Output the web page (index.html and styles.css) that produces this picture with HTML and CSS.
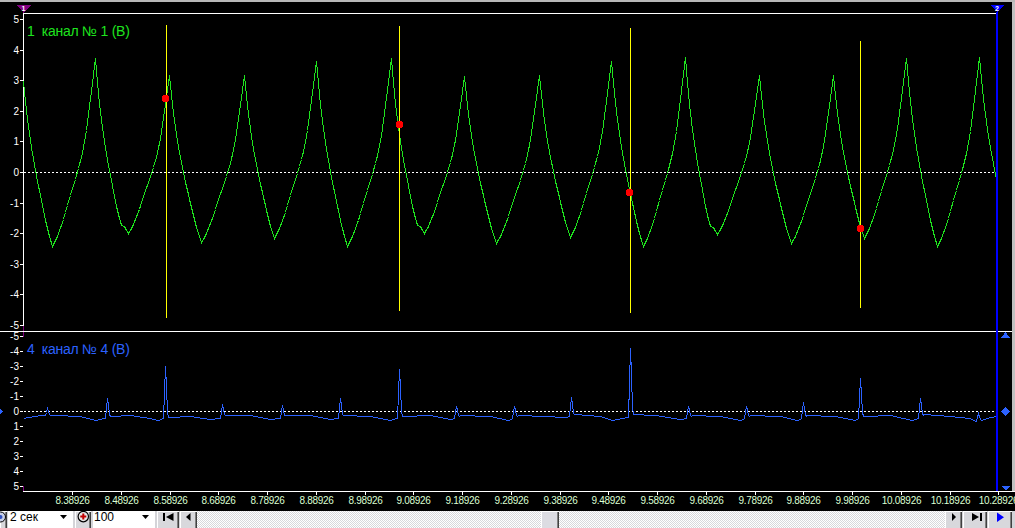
FILE: index.html
```html
<!DOCTYPE html>
<html lang="ru">
<head>
<meta charset="utf-8">
<title>Осциллограмма</title>
<link rel="stylesheet" href="styles.css">
</head>
<body>
<div class="window">
  <div class="topbar"></div>
  <div class="scope">
    <svg class="chart" width="1015" height="509" viewBox="0 2 1015 509" shape-rendering="crispEdges">
      <rect class="edge" x="1012" y="2" width="3" height="489"/>
      <path class="ln-purple" d="M23.5 11V13M23.5 326V337M23.5 486V491"/>
      <path class="ln-white" d="M23 13.5H996M23.5 13V326M0 331.5H1012M23 491.5H1015"/>
      <path class="ln-white" d="M20 19.5H23M20 50.5H23M20 80.5H23M20 111.5H23M20 141.5H23M20 172.5H23M20 203.5H23M20 233.5H23M20 264.5H23M20 294.5H23M20 325.5H23"/>
      <path class="ln-white" d="M20 336.5H23M20 351.5H23M20 366.5H23M20 381.5H23M20 396.5H23M20 411.5H23M20 426.5H23M20 441.5H23M20 456.5H23M20 471.5H23M20 486.5H23"/>
      <path class="ln-white" d="M72.5 492V495M121.5 492V495M170.5 492V495M218.5 492V495M267.5 492V495M316.5 492V495M365.5 492V495M413.5 492V495M462.5 492V495M511.5 492V495M560.5 492V495M608.5 492V495M657.5 492V495M706.5 492V495M755.5 492V495M803.5 492V495M852.5 492V495M901.5 492V495M950.5 492V495M998.5 492V495"/>
      <path class="ln-dot" d="M24 172.5H996M24 411.5H996"/>

      <g class="ylab">
        <text x="19" y="22.5">5</text>
        <text x="19" y="53.5">4</text>
        <text x="19" y="83.5">3</text>
        <text x="19" y="114.5">2</text>
        <text x="19" y="144.5">1</text>
        <text x="19" y="175.5">0</text>
        <text x="19" y="206.5">-1</text>
        <text x="19" y="236.5">-2</text>
        <text x="19" y="267.5">-3</text>
        <text x="19" y="297.5">-4</text>
        <text x="19" y="328.5">-5</text>
        <text x="19" y="339.5">-5</text>
        <text x="19" y="354.5">-4</text>
        <text x="19" y="369.5">-3</text>
        <text x="19" y="384.5">-2</text>
        <text x="19" y="399.5">-1</text>
        <text x="19" y="414.5">0</text>
        <text x="19" y="429.5">1</text>
        <text x="19" y="444.5">2</text>
        <text x="19" y="459.5">3</text>
        <text x="19" y="474.5">4</text>
        <text x="19" y="489.5">5</text>
      </g>

      <g class="xlab">
        <text x="72.5" y="504">8.38926</text>
        <text x="121.5" y="504">8.48926</text>
        <text x="170.5" y="504">8.58926</text>
        <text x="218.5" y="504">8.68926</text>
        <text x="267.5" y="504">8.78926</text>
        <text x="316.5" y="504">8.88926</text>
        <text x="365.5" y="504">8.98926</text>
        <text x="413.5" y="504">9.08926</text>
        <text x="462.5" y="504">9.18926</text>
        <text x="511.5" y="504">9.28926</text>
        <text x="560.5" y="504">9.38926</text>
        <text x="608.5" y="504">9.48926</text>
        <text x="657.5" y="504">9.58926</text>
        <text x="706.5" y="504">9.68926</text>
        <text x="755.5" y="504">9.78926</text>
        <text x="803.5" y="504">9.88926</text>
        <text x="852.5" y="504">9.98926</text>
        <text x="901.5" y="504">10.08926</text>
        <text x="950.5" y="504">10.18926</text>
        <text x="998.5" y="504">10.28926</text>
      </g>

      <text class="chlab ch1" x="27" y="36">1&#160;&#160;канал № 1 (В)</text>
      <text class="chlab ch4" x="27" y="354">4&#160;&#160;канал № 4 (В)</text>

      <path id="wave4" class="wave wave-b" d=""/>
      <path id="wave1" class="wave wave-g" d=""/>

      <path class="ln-yellow" d="M166.5 25V318M399.5 26V311M630.5 28V313M860.5 41V308"/>
      <g class="dot">
        <circle cx="165.5" cy="98.5" r="3.6"/>
        <circle cx="399.5" cy="124.5" r="3.6"/>
        <circle cx="629.5" cy="192.5" r="3.6"/>
        <circle cx="860.5" cy="228.5" r="3.6"/>
      </g>

      <rect class="cursor2" x="996" y="12" width="2" height="479"/>
      <polygon class="mk-purple" points="16,5 31,5 23.5,12.5"/>
      <text class="mknum" x="23.5" y="10.5">1</text>
      <polygon class="mk-blue" points="990,5 1004,5 997,12"/>
      <text class="mknum" x="997" y="10.5">2</text>

      <polygon class="mk-ch4" points="1001,338 1010,338 1005.5,332"/>
      <polygon class="mk-ch4" points="1005.5,407 1010,411.5 1005.5,416 1001,411.5"/>
      <polygon class="mk-ch4" points="-2,407 2.5,411.5 -2,416 -6.5,411.5"/>
      <polygon class="mk-ch4" points="1002,486 1010,486 1006,491"/>
    </svg>
  </div>
  <div class="toolbar">
    <div class="btn part">
      <svg width="7" height="17" viewBox="0 0 7 17"><circle cx="0.5" cy="6" r="5" fill="#c8d0e8" stroke="#000"/><circle cx="0.5" cy="6" r="2" fill="#3050c0"/></svg>
    </div>
    <div class="combo c-time"><span class="val">2 сек</span><span class="drop"></span></div>
    <div class="btn ico">
      <svg width="16" height="17" viewBox="0 0 16 17"><circle cx="8.3" cy="5.6" r="5.2" fill="#e6e6e6" stroke="#000" stroke-width="1.2"/><path d="M8.3 2.6V8.6M5.3 5.6H11.3" stroke="#c00000" stroke-width="2"/></svg>
    </div>
    <div class="combo c-zoom"><span class="val">100</span><span class="drop"></span></div>
    <div class="btn b-first">
      <svg width="22" height="17" viewBox="0 0 22 17"><rect x="6" y="2" width="2" height="8"/><polygon points="16.5,2 16.5,10 9,6"/></svg>
    </div>
    <div class="btn b-prev">
      <svg width="17" height="17" viewBox="0 0 17 17"><polygon points="10.5,2 10.5,10 6,6"/></svg>
    </div>
    <div class="track"><div class="thumb"></div></div>
    <div class="btn b-next">
      <svg width="17" height="17" viewBox="0 0 17 17"><polygon points="7,2 7,10 11,6"/></svg>
    </div>
    <div class="btn b-last">
      <svg width="24" height="17" viewBox="0 0 24 17"><polygon points="9,2 9,10 16,6"/><rect x="17" y="2" width="2" height="8"/></svg>
    </div>
    <div class="btn b-play">
      <svg width="24" height="17" viewBox="0 0 24 17"><polygon class="blue-tri" points="9,1.5 9,11 16,6.25"/></svg>
    </div>
    <div class="tail"></div>
  </div>
</div>
<script src="script.js"></script>
</body>
</html>
```

FILE: styles.css
```css
* { box-sizing: border-box; }
html, body { margin: 0; padding: 0; }
body {
  width: 1015px;
  height: 528px;
  overflow: hidden;
  background: #000;
  font-family: "Liberation Sans", Arial, sans-serif;
}
.window {
  display: flex;
  flex-direction: column;
  width: 1015px;
  height: 528px;
}
.topbar {
  flex: none;
  height: 2px;
  background: #b8b8b8;
}
.scope {
  flex: none;
  height: 509px;
  display: flex;
  background: #000;
}
.chart { display: block; }

.edge { fill: #c0c0c0; }
.ln-white { stroke: #fff; stroke-width: 1; fill: none; }
.ln-purple { stroke: #800080; stroke-width: 1; fill: none; }
.ln-dot { stroke: #fff; stroke-width: 1; stroke-dasharray: 2 2; fill: none; }
.ln-yellow { stroke: #ffff00; stroke-width: 1; fill: none; }
.cursor2 { fill: #0000ff; }
.wave { fill: none; stroke-width: 1; }
.wave-g { stroke: #1ee41e; }
.wave-b { stroke: #2c62ff; }
.dot circle { fill: #ff0000; }

.ylab text {
  fill: #fff;
  font-family: "Liberation Sans", Arial, sans-serif;
  font-size: 10px;
  text-anchor: end;
}
.xlab text {
  fill: #dcffd2;
  font-family: "Liberation Sans", Arial, sans-serif;
  font-size: 10px;
  letter-spacing: -0.3px;
  text-anchor: middle;
}
.chlab {
  font-family: "Liberation Sans", Arial, sans-serif;
  font-size: 14px;
  letter-spacing: -0.25px;
}
.ch1 { fill: #1ee41e; }
.ch4 { fill: #2c62ff; }
.mk-purple { fill: #800080; }
.mk-blue { fill: #0000ff; }
.mk-ch4 { fill: #2c62ff; }
.mknum {
  fill: #fff;
  font-family: "Liberation Sans", Arial, sans-serif;
  font-size: 7px;
  font-weight: bold;
  text-anchor: middle;
}

/* bottom toolbar */
.toolbar {
  flex: none;
  display: flex;
  height: 17px;
  overflow: hidden;
  background: #d4d4d8;
}
.btn {
  flex: none;
  height: 21px;
  background: #d8d8dc;
  box-shadow: inset 1px 1px #ffffff, inset -1px -1px #404040, inset -2px -2px #808080;
}
.btn svg { display: block; fill: #000; }
.part { width: 7px; margin-right: 1px; }
.combo {
  flex: none;
  height: 21px;
  display: flex;
  background: #fff;
  color: #000;
  font: 12px/12px "Liberation Sans", Arial, sans-serif;
  padding-left: 2px;
}
.c-time { width: 65px; }
.c-zoom { width: 62px; margin-left: 2px; padding-left: 1px; }
.drop {
  margin-left: auto;
  margin-right: 6px;
  margin-top: 4px;
  width: 7px;
  height: 4px;
  background: #000;
  clip-path: polygon(0 0, 100% 0, 50% 100%);
}
.ico { width: 16px; margin-left: 2px; }
.b-first { width: 22px; margin-left: 2px; }
.b-prev { width: 17px; margin-left: 1px; }
.track {
  flex: none;
  width: 748px;
  height: 21px;
  display: flex;
  background: repeating-conic-gradient(#ffffff 0 25%, #d8d8dc 0 50%) 0 0 / 2px 2px;
}
.thumb {
  flex: none;
  width: 18px;
  height: 21px;
  margin-left: 344px;
  background: #dcdce2;
  box-shadow: inset 1px 1px #ffffff, inset -1px -1px #404040, inset -2px -2px #808080;
}
.b-next { width: 17px; }
.b-last { width: 24px; margin-left: 1px; }
.b-play { width: 24px; margin-left: 1px; }
.blue-tri { fill: #0000ff; }
.tail { flex: none; width: 3px; }
```

FILE: script.js
```js
(function () {
  var SHAPES = {
    r: [[0, 0], [0.1, 0.045], [0.25, 0.14], [0.4, 0.26], [0.55, 0.37], [0.68, 0.48], [0.78, 0.6], [0.92, 0.85], [1, 1]],
    f: [[0, 0], [0.07, 0.13], [0.14, 0.25], [0.24, 0.38], [0.34, 0.49], [0.5, 0.64], [0.65, 0.76], [0.8, 0.88], [0.9, 0.945], [1, 1]],
    l: [[0, 0], [1, 1]]
  };

  function table(tbl, t) {
    if (t <= 0) return 0;
    for (var i = 1; i < tbl.length; i++) {
      if (t <= tbl[i][0]) {
        var a = tbl[i - 1], b = tbl[i];
        return a[1] + (b[1] - a[1]) * (t - a[0]) / (b[0] - a[0]);
      }
    }
    return 1;
  }

  function curve(keys, x) {
    for (var i = 1; i < keys.length; i++) {
      var a = keys[i - 1], b = keys[i];
      if (x <= b[0]) {
        var t = (x - a[0]) / (b[0] - a[0]);
        return a[1] + (b[1] - a[1]) * table(SHAPES[b[2] || 'l'], t);
      }
    }
    return keys[keys.length - 1][1];
  }

  function toPath(ys, x0) {
    var d = '';
    for (var i = 0; i < ys.length; i++) {
      d += (i ? 'L' : 'M') + (x0 + i + 0.5) + ' ' + (Math.round(ys[i]) + 0.5);
    }
    return d;
  }

  /* channel 1: peaks / troughs in screen coordinates */
  var G = [
    [21, 58], [52, 246, 'f'], [95, 58, 'r'],
    [121, 225, 'f'], [124, 226, 'l'], [128, 233, 'l'],
    [169, 75, 'r'], [201, 242, 'f'], [244, 75, 'r'], [274, 238, 'f'],
    [316, 61, 'r'], [347, 246, 'f'], [391, 58, 'r'],
    [417, 225, 'f'], [420, 226, 'l'], [424, 233, 'l'],
    [464, 76, 'r'], [496, 243, 'f'], [539, 75, 'r'], [570, 237, 'f'],
    [611, 61, 'r'], [643, 246, 'f'], [685, 57, 'r'],
    [710, 226, 'f'], [713, 227, 'l'], [717, 234, 'l'],
    [759, 75, 'r'], [791, 243, 'f'], [833, 75, 'r'], [864, 238, 'f'],
    [906, 58, 'r'], [937, 246, 'f'], [979, 57, 'r'], [1011, 240, 'f']
  ];

  /* channel 4: baseline and spikes */
  var B = [
    [23, 418], [40, 415], [55, 415], [80, 416], [95, 420], [104, 418], [110, 416], [130, 415],
    [150, 418], [158, 420], [163, 418], [169, 417], [190, 416], [210, 419], [219, 418], [226, 415],
    [250, 415], [270, 419], [279, 418], [286, 415], [310, 415], [330, 419], [337, 418], [344, 415],
    [370, 416], [390, 420], [396, 418], [402, 416], [430, 415], [450, 419], [454, 418], [460, 415],
    [490, 416], [508, 420], [512, 418], [518, 415], [545, 416], [565, 417], [569, 416], [575, 414],
    [600, 416], [612, 420], [627, 417], [633, 414], [655, 415], [680, 419], [686, 418], [692, 415],
    [720, 416], [740, 420], [744, 418], [750, 415], [780, 416], [797, 420], [801, 418], [807, 415],
    [835, 416], [855, 420], [858, 418], [864, 416], [890, 415], [912, 420], [918, 418], [924, 414],
    [950, 416], [970, 418], [976, 421], [981, 420], [990, 417], [996, 416]
  ];
  var S = [
    [47, 408], [107, 398], [165, 366], [222, 404], [282, 405], [340, 398], [399, 369], [456, 406],
    [514, 406], [571, 397], [630, 348], [688, 406], [746, 406], [803, 402], [860, 378], [920, 398],
    [978, 413]
  ];

  var x0 = 23, x1 = 996;
  var g = [], b = [];
  for (var x = x0; x <= x1; x++) {
    g.push(curve(G, x));
    b.push(curve(B, x));
  }
  var prof = [[-1, 0.5], [0, 1], [1, 0.6], [2, 0.12]];
  S.forEach(function (s) {
    prof.forEach(function (p) {
      var i = s[0] + p[0] - x0;
      if (i >= 0 && i < b.length) {
        b[i] = b[i] - p[1] * (b[i] - s[1]);
      }
    });
  });

  document.getElementById('wave1').setAttribute('d', toPath(g, x0));
  document.getElementById('wave4').setAttribute('d', toPath(b, x0));
})();
```
